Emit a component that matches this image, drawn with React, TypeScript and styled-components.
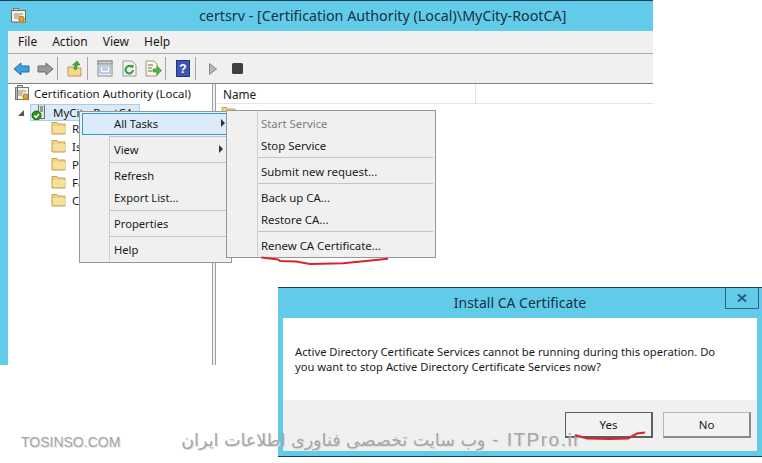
import React from "react";
import styled, { createGlobalStyle } from "styled-components";

const UI = `"Noto Sans", "Open Sans", sans-serif`;

const Global = createGlobalStyle`
  html, body { margin: 0; padding: 0; background: #fff; }
  #root { width: 762px; height: 463px; }
`;

const Page = styled.div`
  position: relative;
  width: 762px;
  height: 463px;
  overflow: hidden;
  background: #fff;
  font-family: ${UI};
  font-size: 11.5px;
  color: #1a1a1a;
`;

const ConsoleWindow = styled.div`
  width: 653px;
  height: 365px;
  box-sizing: border-box;
  border-top: 1px solid #1f3f50;
  background: #63cbea;
  padding-left: 8px;
  display: flex;
  flex-direction: column;
`;

const TitleBar = styled.div`
  height: 30px;
  flex: none;
  display: flex;
  align-items: center;
  padding-left: 3px;
`;

const WindowTitle = styled.div`
  margin-left: 172px;
  padding-bottom: 2px;
  font-size: 14.3px;
  color: #14323f;
  white-space: nowrap;
`;

const MenuBar = styled.div`
  flex: none;
  background: #f0f0f0;
  border-bottom: 1px solid #a8a8a8;
  display: flex;
  align-items: center;
  padding: 0 0 2px 10px;
  box-sizing: content-box;
  height: 20px;
  gap: 15px;
  font-size: 12px;
`;

const ToolBar = styled.div`
  height: 29px;
  flex: none;
  background: #f0f0f0;
  border-bottom: 1px solid #808080;
  display: flex;
  align-items: center;
  padding-left: 1px;
`;

const ToolButton = styled.div`
  width: 24px;
  height: 22px;
  display: flex;
  align-items: center;
  justify-content: center;
`;

const ToolSep = styled.div`
  width: 1px;
  height: 23px;
  background: #a6a6a6;
  margin-right: 5px;
`;

const Panes = styled.div`
  flex: 1;
  min-height: 0;
  display: flex;
  background: #f0f0f0;
`;

const TreePane = styled.div`
  width: 204px;
  flex: none;
  background: #fff;
  border-right: 1px solid #a0a0a0;
  font-size: 11.5px;
  overflow: hidden;
`;

const ListPane = styled.div`
  flex: 1;
  margin-left: 2px;
  background: #fff;
  border-left: 1px solid #a0a0a0;
  overflow: hidden;
`;

const TreeRow = styled.div<{ $indent: number }>`
  height: 18px;
  display: flex;
  align-items: center;
  gap: 6px;
  margin-left: ${(p) => p.$indent}px;
  white-space: nowrap;
`;

const AuthorityRow = styled(TreeRow)`
  gap: 4px;
`;

const RootRow = styled(TreeRow)`
  height: 17px;
  margin-top: 2px;
  margin-bottom: -2px;
`;

const Expander = styled.div`
  margin-left: 10px;
  width: 0;
  height: 0;
  border-style: solid;
  border-width: 0 0 6px 6px;
  border-color: transparent transparent #555 transparent;
`;

const SelectedNode = styled.div`
  width: 110px;
  height: 17px;
  box-sizing: border-box;
  background: #d9ebf9;
  border: 1px solid #a9cde8;
  display: flex;
  align-items: center;
  gap: 5px;
  overflow: hidden;
  white-space: nowrap;
`;

const ListHeader = styled.div`
  height: 19px;
  display: flex;
  border-bottom: 1px solid #e5e5e5;
`;

const NameColumn = styled.div`
  width: 260px;
  box-sizing: border-box;
  border-right: 1px solid #e5e5e5;
  padding-left: 7px;
  font-size: 11.8px;
  line-height: 21px;
`;

const ListRow = styled.div`
  display: flex;
  align-items: center;
  gap: 4px;
  height: 18px;
  padding-left: 5px;
  white-space: nowrap;
`;

const PopupMenu = styled.div<{ $left: number; $top: number; $width: number; $gutter: number; $size: number }>`
  position: absolute;
  left: ${(p) => p.$left}px;
  top: ${(p) => p.$top}px;
  width: ${(p) => p.$width}px;
  box-sizing: border-box;
  background: #f0f0f0;
  border: 1px solid #979797;
  padding: 1px 2px;
  background-image: linear-gradient(#cfcfcf, #cfcfcf);
  background-repeat: no-repeat;
  background-size: 1px 100%;
  background-position: ${(p) => p.$gutter}px 0;
  font-size: ${(p) => p.$size}px;
`;

const MenuRow = styled.div<{ $active?: boolean; $disabled?: boolean; $pad: number; $lift?: boolean }>`
  height: 22px;
  box-sizing: border-box;
  display: flex;
  align-items: center;
  justify-content: space-between;
  padding-left: ${(p) => p.$pad}px;
  padding-right: 6px;
  padding-bottom: ${(p) => (p.$lift ? 2 : 0)}px;
  color: ${(p) => (p.$disabled ? "#7d7d7d" : "#1a1a1a")};
  background: ${(p) => (p.$active ? "#dcebfb" : "transparent")};
  border: 1px solid ${(p) => (p.$active ? "#2aa0cf" : "transparent")};
  border-right: none;
  margin-right: ${(p) => (p.$active ? "-2px" : "0")};
`;

const MenuSep = styled.div<{ $inset: number }>`
  height: 1px;
  margin: 1px 0 2px ${(p) => p.$inset}px;
  background: #c4c4c4;
`;

const SubArrow = styled.span`
  width: 0;
  height: 0;
  border-style: solid;
  border-width: 4px 0 4px 4px;
  border-color: transparent transparent transparent #333;
`;

const Dialog = styled.div`
  position: absolute;
  left: 278px;
  top: 287px;
  width: 484px;
  height: 170px;
  box-sizing: border-box;
  border-top: 1px solid #1f3f50;
  border-bottom: 1px solid #1f3f50;
  background: #63cbea;
  padding: 0 5px 5px;
  display: flex;
  flex-direction: column;
`;

const DialogTitle = styled.div`
  height: 30px;
  flex: none;
  box-sizing: border-box;
  padding-bottom: 2px;
  display: flex;
  align-items: center;
  justify-content: center;
  font-size: 14px;
  color: #14323f;
`;

const CloseButton = styled.div`
  position: absolute;
  right: 3px;
  top: -1px;
  width: 32px;
  height: 20px;
  border: 1px solid #2f6478;
  border-top-color: #1f3f50;
  display: flex;
  align-items: center;
  justify-content: center;
`;

const DialogBody = styled.div`
  height: 82px;
  flex: none;
  box-sizing: border-box;
  background: #fff;
  padding: 26px 12px 0;
  font-size: 11.2px;
  line-height: 15px;
  color: #1a1a1a;
`;

const DialogFooter = styled.div`
  flex: 1;
  background: #f0f0f0;
  display: flex;
  justify-content: flex-end;
  align-items: flex-start;
  gap: 10px;
  padding: 12px 6px 0 0;
`;

const DialogButton = styled.div<{ $default?: boolean }>`
  width: 88px;
  height: 26px;
  box-sizing: border-box;
  background: #f2f2f2;
  display: flex;
  align-items: center;
  justify-content: center;
  font-size: 11.5px;
  border: 1px solid ${(p) => (p.$default ? "#5f5f5f" : "#b5b5b5")};
  border-right: 2px solid ${(p) => (p.$default ? "#5f5f5f" : "#8a8a8a")};
  border-bottom: 2px solid ${(p) => (p.$default ? "#5f5f5f" : "#8a8a8a")};
`;

const Scribbles = styled.svg`
  position: absolute;
  left: 0;
  top: 0;
  pointer-events: none;
`;

const SiteMark = styled.div`
  position: absolute;
  left: 21px;
  top: 433px;
  font-family: "Liberation Sans", sans-serif;
  font-size: 14px;
  line-height: 18px;
  color: #a4a4a4;
  text-shadow: 1px 1px 0 #e4e4e4;
  white-space: nowrap;
`;

const Watermark = styled.div`
  position: absolute;
  left: 160px;
  top: 429px;
  width: 421px;
  display: flex;
  justify-content: flex-end;
  align-items: baseline;
  white-space: nowrap;
  color: #a6a6a6;
  text-shadow: 1px 1px 0 #dedede;
`;

const WatermarkFa = styled.span`
  font-family: "DejaVu Sans", sans-serif;
  font-size: 17.5px;
`;

const WatermarkEn = styled.span`
  font-family: "Liberation Sans", sans-serif;
  font-size: 19px;
  letter-spacing: 1.5px;
`;

const Folder = () => (
  <svg width="15" height="14" viewBox="0 0 15 14">
    <path d="M1 3V1.500h5L7 3h7v10H1z" fill="#f0d184" stroke="#c4a252" />
    <path d="M2 5h12v7H2z" fill="#f6e09c" />
  </svg>
);

const CertIcon = () => (
  <svg width="16" height="16" viewBox="0 0 16 16">
    <rect x="3.500" y="0.500" width="5" height="3" fill="#ddd" stroke="#777" />
    <rect x="1.500" y="2.500" width="13" height="12" fill="#f6f2e2" stroke="#777" />
    <path d="M4 6h8M4 8h5M4 10h4" stroke="#8a8a8a" />
    <rect x="1.500" y="2.500" width="2" height="12" fill="#bbb" stroke="#777" />
    <circle cx="11.500" cy="11.500" r="2.600" fill="#e0a92e" stroke="#a8741a" />
    <path d="M10 13.500l-.8 2.200 2.300-1 2.300 1-.8-2.200" fill="#d38a1f" />
  </svg>
);

const ServerIcon = () => (
  <svg width="17" height="17" viewBox="0 0 17 17">
    <rect x="7.500" y="0.500" width="6" height="14" fill="#e2e2e2" stroke="#6e6e6e" />
    <path d="M9 3h3M9 5h3M9 7h3" stroke="#4d4d4d" />
    <circle cx="5.500" cy="11.500" r="4.500" fill="#2f8f1f" stroke="#1d6512" />
    <path d="M3.300 11.500l1.700 1.800 3-3.400" fill="none" stroke="#fff" strokeWidth="1.500" />
  </svg>
);

const AppIcon = () => (
  <svg width="16" height="16" viewBox="0 0 16 16">
    <rect x="2.500" y="0.500" width="5" height="3" fill="#ddd" stroke="#777" />
    <rect x="0.500" y="2.500" width="14" height="11.500" fill="#f6f2e2" stroke="#6e6e6e" />
    <path d="M3 6h9M3 8h6M3 10h4" stroke="#8a8a8a" />
    <circle cx="10.500" cy="11" r="2.700" fill="#e0a92e" stroke="#a8741a" />
    <path d="M9 13l-.8 2.400 2.300-1 2.300 1-.8-2.400" fill="#d38a1f" />
  </svg>
);

const ArrowIcon = ({ flip, fill, stroke }: { flip?: boolean; fill: string; stroke: string }) => (
  <svg width="17" height="14" viewBox="0 0 17 14">
    <path d={flip ? "M1 4h8V1l7 6-7 6v-3H1z" : "M16 4H8V1L1 7l7 6v-3h8z"} fill={fill} stroke={stroke} />
  </svg>
);

const UpIcon = () => (
  <svg width="16" height="17" viewBox="0 0 16 17">
    <path d="M1 7h5l1 1h7v8H1z" fill="#f2d98c" stroke="#bd9c4e" />
    <path d="M7 9l1-4H5.500L10 1l3 4h-2.500L9 10z" fill="#4aa83a" stroke="#2c7c22" strokeWidth="0.600" />
  </svg>
);

const ListIcon = () => (
  <svg width="16" height="17" viewBox="0 0 16 17">
    <rect x="1" y="1" width="14" height="15" fill="#eef0f2" stroke="#8a8a8a" />
    <rect x="1" y="1" width="14" height="3" fill="#c6cbd0" stroke="#8a8a8a" />
    <rect x="3" y="6" width="10" height="7" fill="#fff" stroke="#7fa3c4" />
    <path d="M5 8h6M5 10h6" stroke="#7fa3c4" />
  </svg>
);

const RefreshIcon = () => (
  <svg width="15" height="17" viewBox="0 0 15 17">
    <path d="M1 1h9l4 4v11H1z" fill="#f3f3ee" stroke="#9a9a9a" />
    <path d="M11 10a3.700 3.700 0 1 1-1.200-3" fill="none" stroke="#2f9c3a" strokeWidth="2" />
    <path d="M8.500 4.500l3.500 1-1.500 3z" fill="#2f9c3a" />
  </svg>
);

const ExportIcon = () => (
  <svg width="17" height="17" viewBox="0 0 17 17">
    <path d="M1 1h8l3 3v12H1z" fill="#fbf7df" stroke="#9a9a9a" />
    <path d="M3 5h5M3 8h4M3 11h4" stroke="#6d6d6d" />
    <path d="M8 9h4V6l4.500 4.500L12 15v-3H8z" fill="#55b548" stroke="#2d8a25" strokeWidth="0.600" />
  </svg>
);

const HelpIcon = () => (
  <svg width="14" height="17" viewBox="0 0 14 17">
    <rect x="0.500" y="0.500" width="13" height="16" fill="#3a57b0" stroke="#24357a" />
    <text x="7" y="13" textAnchor="middle" fontFamily="Liberation Sans" fontWeight="700" fontSize="12" fill="#fff">?</text>
  </svg>
);

const PlayIcon = () => (
  <svg width="8" height="12" viewBox="0 0 8 12">
    <path d="M0.500 0.500L7.500 6 0.500 11.500z" fill="#b5b5b5" stroke="#8a8a8a" />
  </svg>
);

const StopIcon = () => (
  <svg width="11" height="11" viewBox="0 0 11 11">
    <rect width="11" height="11" rx="1.500" fill="#3f3f3f" />
  </svg>
);

const CloseGlyph = () => (
  <svg width="10" height="8" viewBox="0 0 10 8">
    <path d="M1 0.500l8 7M9 0.500l-8 7" stroke="#1f5f78" strokeWidth="2" fill="none" />
  </svg>
);

const treeFolders = [
  "Revoked Certificates",
  "Issued Certificates",
  "Pending Requests",
  "Failed Requests",
  "Certificate Templates",
];

const mainItems: (string | null)[] = ["All Tasks", null, "View", null, "Refresh", "Export List...", null, "Properties", null, "Help"];
const taskItems: (string | null)[] = [
  "Start Service",
  "Stop Service",
  null,
  "Submit new request...",
  null,
  "Back up CA...",
  "Restore CA...",
  null,
  "Renew CA Certificate...",
];

export default function App() {
  return (
    <Page>
      <Global />
      <ConsoleWindow>
        <TitleBar>
          <AppIcon />
          <WindowTitle>certsrv - [Certification Authority (Local)\MyCity-RootCA]</WindowTitle>
        </TitleBar>
        <MenuBar>
          <span>File</span>
          <span>Action</span>
          <span>View</span>
          <span>Help</span>
        </MenuBar>
        <ToolBar>
          <ToolButton><ArrowIcon fill="#3f9fe3" stroke="#1f6fb0" /></ToolButton>
          <ToolButton><ArrowIcon flip fill="#9a9a9a" stroke="#6d6d6d" /></ToolButton>
          <ToolSep />
          <ToolButton><UpIcon /></ToolButton>
          <ToolSep />
          <ToolButton><ListIcon /></ToolButton>
          <ToolButton><RefreshIcon /></ToolButton>
          <ToolButton><ExportIcon /></ToolButton>
          <ToolSep />
          <ToolButton><HelpIcon /></ToolButton>
          <ToolSep />
          <ToolButton><PlayIcon /></ToolButton>
          <ToolButton><StopIcon /></ToolButton>
        </ToolBar>
        <Panes>
          <TreePane>
            <AuthorityRow $indent={6}>
              <CertIcon />
              <span>Certification Authority (Local)</span>
            </AuthorityRow>
            <RootRow $indent={0}>
              <Expander />
              <SelectedNode>
                <ServerIcon />
                <span>MyCity-RootCA</span>
              </SelectedNode>
            </RootRow>
            {treeFolders.map((name) => (
              <TreeRow key={name} $indent={43}>
                <Folder />
                <span>{name}</span>
              </TreeRow>
            ))}
          </TreePane>
          <ListPane>
            <ListHeader>
              <NameColumn>Name</NameColumn>
            </ListHeader>
            <ListRow>
              <Folder />
              <span>Revoked Certificates</span>
            </ListRow>
          </ListPane>
        </Panes>
      </ConsoleWindow>

      <PopupMenu $left={79} $top={111} $width={153} $gutter={29} $size={11.2}>
        {mainItems.map((item, i) =>
          item === null ? (
            <MenuSep key={i} $inset={28} />
          ) : (
            <MenuRow key={item} $pad={31} $lift $active={item === "All Tasks"}>
              <span>{item}</span>
              {(item === "All Tasks" || item === "View") && <SubArrow />}
            </MenuRow>
          )
        )}
      </PopupMenu>

      <PopupMenu $left={226} $top={110} $width={210} $gutter={30} $size={11.4}>
        {taskItems.map((item, i) =>
          item === null ? (
            <MenuSep key={i} $inset={29} />
          ) : (
            <MenuRow key={item} $pad={31} $disabled={item === "Start Service"}>
              <span>{item}</span>
            </MenuRow>
          )
        )}
      </PopupMenu>

      <Dialog>
        <DialogTitle>Install CA Certificate</DialogTitle>
        <CloseButton><CloseGlyph /></CloseButton>
        <DialogBody>
          Active Directory Certificate Services cannot be running during this operation. Do
          <br />
          you want to stop Active Directory Certificate Services now?
        </DialogBody>
        <DialogFooter>
          <DialogButton $default>Yes</DialogButton>
          <DialogButton>No</DialogButton>
        </DialogFooter>
      </Dialog>

      <SiteMark>TOSINSO.COM</SiteMark>
      <Watermark>
        <WatermarkFa>وب سایت تخصصی فناوری اطلاعات ایران</WatermarkFa>
        <WatermarkEn>&nbsp;- ITPro.ir</WatermarkEn>
      </Watermark>

      <Scribbles width="762" height="463" viewBox="0 0 762 463">
        <path
          d="M261.500 257.500L278 259.500 280 261 296 261.500 310 264 343 263.300 366 261 388 258.700"
          fill="none"
          stroke="#d8242c"
          strokeWidth="2"
        />
        <path
          d="M575 435L587 438.500 610 439 628 438.500 637 433.500 645 432.500"
          fill="none"
          stroke="#d8242c"
          strokeWidth="2.200"
        />
      </Scribbles>
    </Page>
  );
}
